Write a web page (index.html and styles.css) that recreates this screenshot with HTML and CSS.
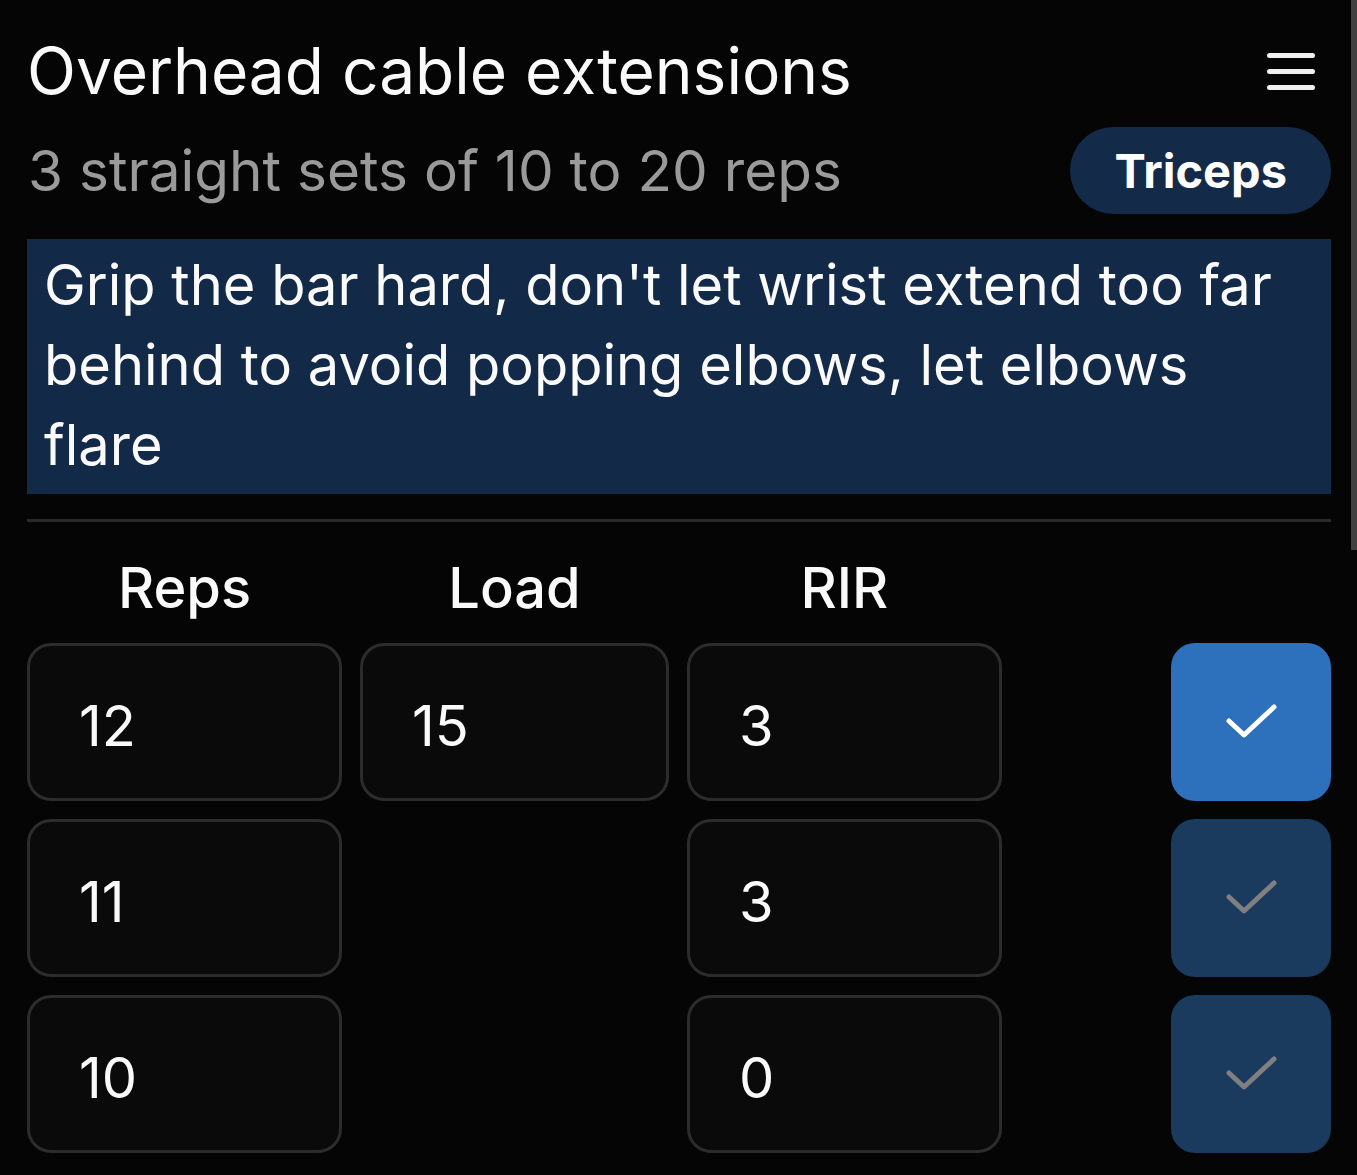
FILE: index.html
```html
<!DOCTYPE html>
<html lang="en">
<head>
    <meta charset="UTF-8">
    <meta name="viewport" content="width=device-width, initial-scale=1.0">
    <title>Overhead cable extensions</title>
    <link rel="stylesheet" href="styles.css">
</head>
<body>
    <div class="page">
        <div class="title-row">
            <h1>Overhead cable extensions</h1>
            <button class="menu-btn" aria-label="Menu">
                <span></span><span></span><span></span>
            </button>
        </div>

        <div class="sub-row">
            <div class="scheme">3 straight sets of 10 to 20 reps</div>
            <div class="muscle">Triceps</div>
        </div>

        <div class="note">Grip the bar hard, don't let wrist extend too far behind to avoid popping elbows, let elbows flare</div>

        <hr class="divider">

        <div class="sets">
            <div class="col-head">Reps</div>
            <div class="col-head">Load</div>
            <div class="col-head">RIR</div>
            <div></div>

            <div class="field">12</div>
            <div class="field">15</div>
            <div class="field">3</div>
            <button class="done active" aria-label="Done">
                <svg viewBox="0 0 60 44" width="60" height="44"><path d="M8 21 L23 35 L53 7"/></svg>
            </button>

            <div class="field">11</div>
            <div></div>
            <div class="field">3</div>
            <button class="done" aria-label="Done">
                <svg viewBox="0 0 60 44" width="60" height="44"><path d="M8 21 L23 35 L53 7"/></svg>
            </button>

            <div class="field">10</div>
            <div></div>
            <div class="field">0</div>
            <button class="done" aria-label="Done">
                <svg viewBox="0 0 60 44" width="60" height="44"><path d="M8 21 L23 35 L53 7"/></svg>
            </button>
        </div>
    </div>
    <div class="scroll-thumb"></div>
</body>
</html>
```

FILE: styles.css
```css
html, body {
    margin: 0;
    background-color: #050505;
    overflow: hidden;
}
body {
    font-family: Inter, "Noto Sans", sans-serif;
    color: #fafafa;
}
.page {
    padding: 33px 26px 0 27px;
}
.title-row {
    display: flex;
    align-items: center;
    justify-content: space-between;
}
h1 {
    margin: 0;
    font-size: 64px;
    font-weight: 400;
    line-height: 1.2;
}
.menu-btn {
    display: flex;
    flex-direction: column;
    gap: 11px;
    background: none;
    border: none;
    padding: 0;
    margin-right: 16px;
    cursor: pointer;
}
.menu-btn span {
    display: block;
    width: 48px;
    height: 5px;
    border-radius: 3px;
    background-color: #f0f0f0;
}
.sub-row {
    display: flex;
    align-items: center;
    justify-content: space-between;
    margin-top: 17px;
}
.scheme {
    font-size: 56.7px;
    color: #9a9a9a;
    padding-left: 1px;
}
.muscle {
    background-color: #132a48;
    color: #ffffff;
    font-weight: 700;
    font-size: 47px;
    height: 87px;
    line-height: 87px;
    padding: 0 44px;
    border-radius: 44px;
}
.note {
    margin-top: 25px;
    background-color: #122947;
    font-size: 56px;
    line-height: 80px;
    padding: 6px 20px 9px 17px;
}
.divider {
    border: none;
    height: 3px;
    background-color: #2a2a2a;
    margin: 25px 0 0 0;
}
.sets {
    display: grid;
    grid-template-columns: 315px 309px 315px 1fr;
    column-gap: 18px;
    row-gap: 18px;
    margin-top: 33px;
}
.col-head {
    text-align: center;
    font-size: 56px;
    font-weight: 500;
    line-height: 67px;
    margin-bottom: 3px;
}
.field {
    height: 158px;
    box-sizing: border-box;
    border: 3px solid #2c2c2c;
    border-radius: 24px;
    background-color: #0a0a0a;
    font-size: 56px;
    display: flex;
    align-items: center;
    padding: 8px 0 0 49px;
}
.done {
    justify-self: end;
    width: 160px;
    height: 158px;
    border: none;
    border-radius: 24px;
    background-color: #1a3a5e;
    display: flex;
    align-items: center;
    justify-content: center;
    cursor: pointer;
    padding: 0;
}
.done svg path {
    fill: none;
    stroke: #808080;
    stroke-width: 5;
    stroke-linecap: round;
    stroke-linejoin: round;
}
.done.active {
    background-color: #2d70bc;
}
.done.active svg path {
    stroke: #ffffff;
}
.scroll-thumb {
    position: fixed;
    top: 0;
    right: 0;
    width: 6px;
    height: 550px;
    background-color: #404040;
}
```
